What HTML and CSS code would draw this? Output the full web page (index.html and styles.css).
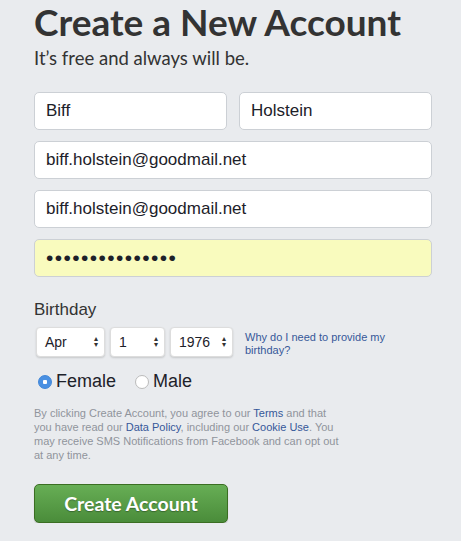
FILE: index.html
```html
<!doctype html>
<html lang="en">
<head>
<meta charset="utf-8">
<title>Create a New Account</title>
<link rel="stylesheet" href="styles.css">
</head>
<body>

	<div class="signup">

		<h1 class="title">Create a New Account</h1>
		<p class="tagline">It’s free and always will be.</p>

		<div class="row">
			<div class="field half">Biff</div>
			<div class="field half">Holstein</div>
		</div>
		<div class="field">biff.holstein@goodmail.net</div>
		<div class="field">biff.holstein@goodmail.net</div>
		<div class="field filled"><span class="dots">•••••••••••••••</span></div>

		<div class="label">Birthday</div>
		<div class="birthday">
			<div class="select month">Apr<span class="arrows">▴<br>▾</span></div>
			<div class="select day">1<span class="arrows">▴<br>▾</span></div>
			<div class="select year">1976<span class="arrows">▴<br>▾</span></div>
			<a class="why" href="">Why do I need to provide my birthday?</a>
		</div>

		<div class="gender">
			<label class="radio"><span class="dot checked"></span>Female</label>
			<label class="radio"><span class="dot"></span>Male</label>
		</div>

		<p class="terms">By clicking Create Account, you agree to our <a href="">Terms</a> and that you have read our <a href="">Data Policy</a>, including our <a href="">Cookie Use</a>. You may receive SMS Notifications from Facebook and can opt out at any time.</p>

		<button class="create">Create Account</button>

	</div>

</body>
</html>
```

FILE: styles.css
```css
	body { background: #e9ebee; color: #1d2129; font-family: "Liberation Sans", Arial, sans-serif; margin: 0; }
	a { color: #365899; text-decoration: none; }

	.signup { padding: 0 0 0 34px; width: 398px; }

	.title { font: bold 37px/44px Lato, sans-serif; margin: 0; color: #333; }
	.tagline { font: 18.5px/24px Lato, sans-serif; margin: 2px 0 0 0; color: #333; }

	.row { display: flex; gap: 12px; margin-top: 22px; }
	.field { background: #fff; border: 1px solid #ccd0d5; border-radius: 5px; box-sizing: border-box; font-size: 17px; height: 38px; line-height: 36px; margin-top: 11px; padding: 0 11px; }
	.row .field { margin-top: 0; }
	.half { flex: 1; }
	.filled { background: #f9fbbe; }
	.dots { font-size: 21px; letter-spacing: 1.4px; }

	.label { font-size: 17px; margin-top: 23px; color: #333; }

	.birthday { align-items: flex-start; display: flex; gap: 5px; margin: 7px 0 0 2px; }
	.select { align-items: center; background: #fff; border: 1px solid #ddd; border-radius: 4px; box-shadow: 0 1px 2px rgba(0,0,0,.15); box-sizing: border-box; display: flex; font-size: 14px; height: 30px; justify-content: space-between; padding: 0 6px 0 8px; }
	.month { width: 69px; }
	.day { width: 55px; }
	.year { width: 63px; }
	.arrows { font-size: 8px; line-height: 6px; color: #333; }
	.why { font-size: 11px; line-height: 13px; margin: 4px 0 0 7px; width: 160px; }

	.gender { display: flex; gap: 19px; margin: 14px 0 0 4px; }
	.radio { align-items: center; display: flex; font-size: 18px; gap: 4px; }
	.dot { background: #fff; border: 1px solid #bbb; border-radius: 50%; box-sizing: border-box; height: 14px; width: 14px; }
	.dot.checked { background: radial-gradient(circle, #fff 2px, #4a90e2 2.5px); border-color: #3d85d8; }

	.terms { color: #90949c; font-size: 11px; line-height: 14px; margin: 14px 0 0 0; width: 312px; }

	.create { background: linear-gradient(#67ae55, #4a8c3a); border: 1px solid #3b6e22; border-radius: 5px; box-shadow: 0 1px 1px rgba(0,0,0,.2); color: #fff; display: block; font: bold 19.5px Lato, sans-serif; height: 39px; margin-top: 22px; text-shadow: 0 1px 1px rgba(0,0,0,.3); width: 194px; }
```
